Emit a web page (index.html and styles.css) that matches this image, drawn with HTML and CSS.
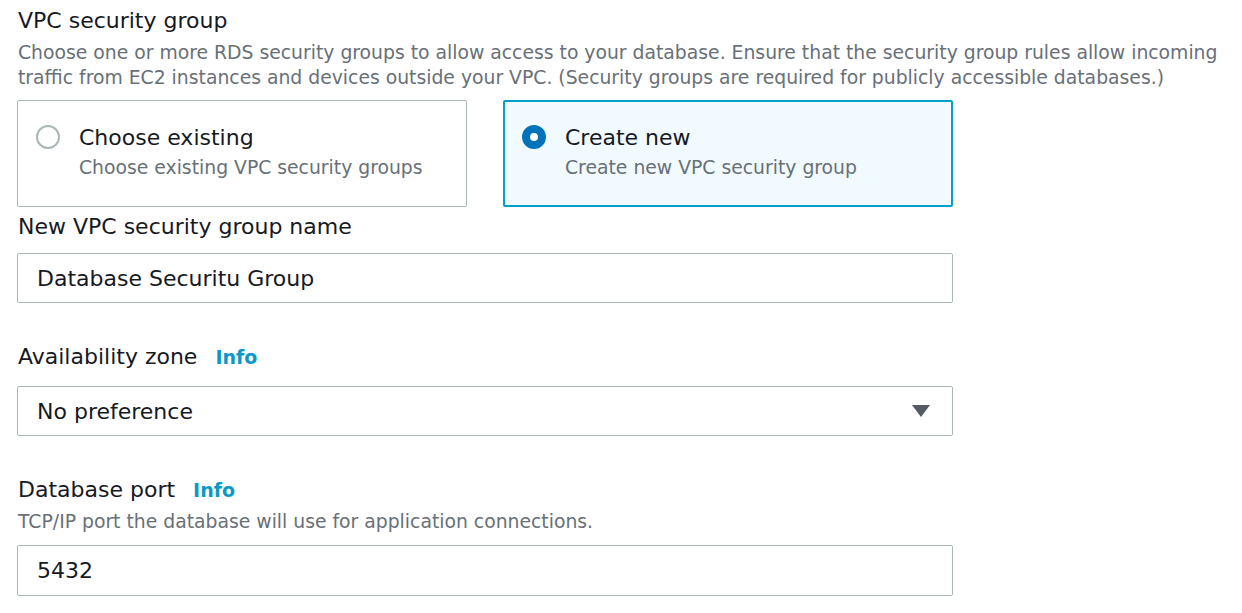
FILE: index.html
```html
<!DOCTYPE html>
<html lang="en">
<head>
<meta charset="utf-8">
<title>VPC security group</title>
<link rel="stylesheet" href="styles.css">
</head>
<body>
<div class="page">
  <section class="field">
    <div class="label">VPC security group</div>
    <div class="desc desc-wide">Choose one or more RDS security groups to allow access to your database. Ensure that the security group rules allow incoming traffic from EC2 instances and devices outside your VPC. (Security groups are required for publicly accessible databases.)</div>
    <div class="tiles">
      <div class="tile">
        <span class="radio"></span>
        <div class="tile-text">
          <div class="tile-title">Choose existing</div>
          <div class="tile-sub">Choose existing VPC security groups</div>
        </div>
      </div>
      <div class="tile tile-selected">
        <span class="radio radio-on"></span>
        <div class="tile-text">
          <div class="tile-title">Create new</div>
          <div class="tile-sub">Create new VPC security group</div>
        </div>
      </div>
    </div>
  </section>

  <section class="field field-name">
    <div class="label">New VPC security group name</div>
    <div class="input input-name">Database Securitu Group</div>
  </section>

  <section class="field field-spaced">
    <div class="label">Availability zone <span class="info">Info</span></div>
    <div class="input input-select">
      <span>No preference</span>
      <svg class="caret" width="18" height="12" viewBox="0 0 18 12"><path d="M0 0H18L9 12Z" fill="#545b64"/></svg>
    </div>
  </section>

  <section class="field field-spaced">
    <div class="label">Database port <span class="info">Info</span></div>
    <div class="desc desc-port">TCP/IP port the database will use for application connections.</div>
    <div class="input input-port">5432</div>
  </section>
</div>
</body>
</html>
```

FILE: styles.css
```css
* { box-sizing: border-box; }
html, body { margin: 0; padding: 0; background: #ffffff; }
body {
  font-family: "DejaVu Sans", "Open Sans", sans-serif;
  color: #16191f;
}
.page {
  padding: 7px 0 0 17px;
  width: 1242px;
}
.label {
  font-size: 22px;
  line-height: 28px;
  padding-left: 1px;
  color: #16191f;
  display: flex;
  align-items: baseline;
}
.info {
  font-size: 19px;
  font-weight: 700;
  color: #0a98c8;
  margin-left: 18px;
}
.desc {
  font-size: 18.8px;
  line-height: 25px;
  color: #687078;
  padding-left: 1px;
}
.desc-wide { margin-top: 5px; width: 1224px; }
.tiles {
  display: flex;
  gap: 36px;
  margin-top: 10px;
}
.tile {
  width: 450px;
  height: 107px;
  border: 1px solid #aab7b8;
  border-radius: 2px;
  display: flex;
  align-items: flex-start;
  padding: 23px 0 0 18px;
  background: #ffffff;
}
.tile-selected {
  width: 450px;
  border: 2px solid #00a1c9;
  background: #f1faff;
  padding: 22px 0 0 17px;
}
.radio {
  width: 24px;
  height: 24px;
  border-radius: 50%;
  border: 2px solid #aab7b8;
  background: #ffffff;
  margin-top: 1px;
  flex: none;
}
.radio-on {
  border: 8px solid #0073bb;
  background: #ffffff;
}
.tile-text { margin-left: 19px; }
.tile-title {
  font-size: 22px;
  line-height: 28px;
  color: #16191f;
}
.tile-sub {
  font-size: 18.8px;
  line-height: 25px;
  color: #687078;
  margin-top: 3px;
}
.field-name { margin-top: 6px; }
.field-spaced { margin-top: 40px; }
.input {
  width: 936px;
  height: 50px;
  border: 1px solid #aab7b8;
  border-radius: 2px;
  padding: 0 0 0 19px;
  font-size: 22px;
  color: #16191f;
  display: flex;
  align-items: center;
}
.input-name { margin-top: 12px; }
.input-select {
  margin-top: 15px;
  justify-content: space-between;
  padding-right: 22px;
}
.caret { display: block; }
.desc-port { margin-top: 5px; }
.input-port { margin-top: 11px; height: 51px; }
```
